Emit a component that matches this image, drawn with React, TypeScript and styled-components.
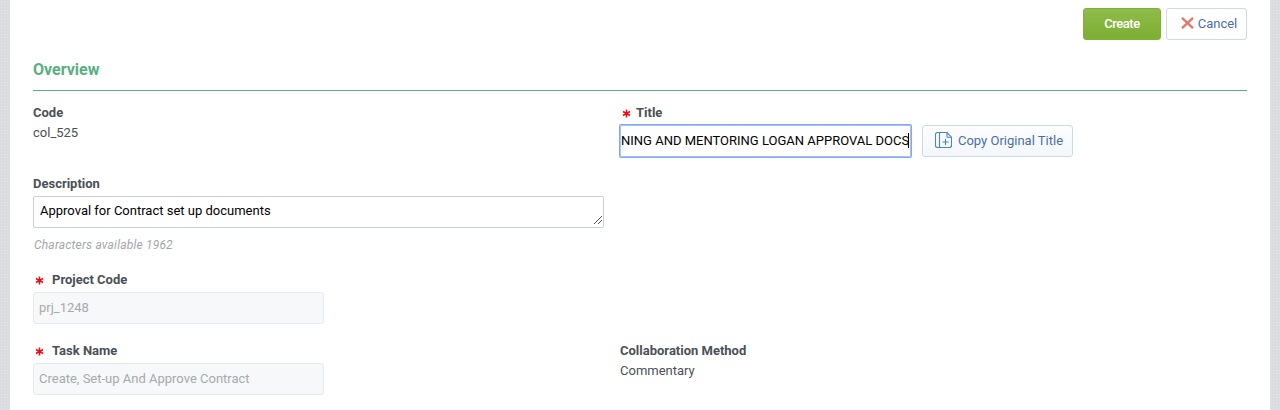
import React from "react";
import styled, { createGlobalStyle } from "styled-components";

const GlobalStyle = createGlobalStyle`
  * { box-sizing: border-box; }
  body {
    margin: 0;
    font-family: Roboto, "Liberation Sans", sans-serif;
    font-size: 13px;
    line-height: 16px;
    color: #4a5056;
    overflow: hidden;
  }
`;

const Page = styled.div`
  height: 410px;
  padding: 0 10px;
  overflow: hidden;
  background-color: #dbdde0;
  background-image:
    repeating-linear-gradient(0deg, rgba(255, 255, 255, 0.12) 0 1px, transparent 1px 3px),
    repeating-linear-gradient(90deg, rgba(120, 125, 130, 0.03) 0 1px, transparent 1px 3px);
`;

const Panel = styled.main`
  height: 100%;
  padding: 8px 23px 0;
  background: #fff;
`;

const Toolbar = styled.div`
  display: flex;
  justify-content: flex-end;
  gap: 5px;
`;

const Button = styled.button<{ $width: number }>`
  display: flex;
  align-items: center;
  justify-content: center;
  flex: none;
  width: ${(p) => p.$width}px;
  height: 32px;
  padding: 0 0 1px;
  border: 1px solid #cddae6;
  border-radius: 3px;
  background: #fff;
  color: #4a6fa5;
  font: 400 13px/16px Roboto, "Liberation Sans", sans-serif;
  white-space: nowrap;
`;

const PrimaryButton = styled(Button)`
  border-color: #82b03a;
  background: linear-gradient(#8fbc4c, #7dae31);
  color: #fff;
  font-weight: 500;
  letter-spacing: -0.45px;
`;

const CancelButton = styled(Button)`
  gap: 4px;
  padding-left: 5px;

  svg {
    margin-top: -2px;
  }
`;

const CopyButton = styled(Button)`
  gap: 6px;
  padding-left: 3px;
  background: linear-gradient(#fcfdff, #f3f7fc);
`;

const SectionTitle = styled.h2`
  height: 51px;
  margin: 0 0 14px;
  padding-top: 20px;
  border-bottom: 1px solid #57b07f;
  color: #57b07f;
  font-size: 16px;
  font-weight: 700;
  line-height: 20px;
`;

const Form = styled.div`
  display: grid;
  grid-template-columns: 587px 1fr;
  grid-template-rows: 71px 96px 71px 71px;
`;

const Field = styled.div<{ $wide?: boolean }>`
  display: flex;
  flex-direction: column;
  gap: 4px;
  grid-column: ${(p) => (p.$wide ? "1 / -1" : "auto")};
`;

const Label = styled.div`
  display: flex;
  height: 16px;
  font-weight: 700;
`;

const Star = styled.svg<{ $gap: number }>`
  width: 9px;
  height: 9px;
  margin: 4px ${(p) => p.$gap}px 0 2px;
  stroke: #f5090d;
  stroke-width: 1.5;
`;

const Value = styled.div`
  height: 16px;
`;

const InputRow = styled.div`
  display: flex;
  gap: 11px;
`;

const TitleBox = styled.div`
  display: flex;
  align-items: center;
  justify-content: flex-end;
  width: 291px;
  height: 32px;
  padding: 0 2px 1px 1px;
  background: #fff;
  box-shadow: inset 0 0 0 1px #a3c2f3, 0 0 0 1px #82aaf0;
  color: #000;
  white-space: nowrap;
  border-radius: 1px;
`;

const Caret = styled.span`
  width: 1px;
  height: 15px;
  margin-left: -1px;
  background: #000;
`;

const TextBox = styled.div`
  display: flex;
  align-items: center;
  justify-content: space-between;
  width: 571px;
  height: 32px;
  padding: 0 1px 2px 6px;
  border: 1px solid #cbd0d4;
  border-radius: 2px;
  color: #000;
`;

const Grip = styled.svg`
  align-self: flex-end;
  width: 9px;
  height: 9px;
  fill: #555;
`;

const Hint = styled.div`
  margin: 5px 0 0 1px;
  color: #a3a7aa;
  font-size: 12px;
  font-style: italic;
  letter-spacing: 0.19px;
`;

const DisabledBox = styled.div`
  display: flex;
  align-items: center;
  width: 291px;
  height: 32px;
  padding: 0 5px 1px;
  border: 1px solid #e3e9ef;
  border-radius: 3px;
  background: #f6f8fa;
  color: #a6aaad;
`;

const Required = ({ gap = 8 }: { gap?: number }) => (
  <Star $gap={gap} viewBox="0 0 9 9">
    <path d="M4.5 .5v8M1 2.5l7 4M8 2.5l-7 4" />
  </Star>
);

const gripDots = [[8, 0], [7, 1], [6, 2], [5, 3], [4, 4], [3, 5], [2, 6], [1, 7], [8, 4], [7, 5], [6, 6], [5, 7]];

export default function App() {
  return (
    <>
      <GlobalStyle />
      <Page>
        <Panel>
          <Toolbar>
            <PrimaryButton $width={78}>Create</PrimaryButton>
            <CancelButton $width={81}>
              <svg width="13" height="12" viewBox="0 0 13 12" fill="none" stroke="#e17c6c" strokeWidth="2.4">
                <path d="M1 .8l11 10.4M12 .8L1 11.2" />
              </svg>
              Cancel
            </CancelButton>
          </Toolbar>
          <SectionTitle>Overview</SectionTitle>
          <Form>
            <Field>
              <Label>Code</Label>
              <Value>col_525</Value>
            </Field>
            <Field>
              <Label><Required gap={5} />Title</Label>
              <InputRow>
                <TitleBox>
                  <span>NING AND MENTORING LOGAN APPROVAL DOCS</span>
                  <Caret />
                </TitleBox>
                <CopyButton $width={151}>
                  <svg width="17" height="17" viewBox="0 0 17 17" fill="none" stroke="#4a84c4" strokeWidth="1.1">
                    <path d="M12 .5H2.500a2 2 0 0 0-2 2v11a2 2 0 0 0 2 2h12a2 2 0 0 0 2-2V5.200zM12 .5v3.700a1 1 0 0 0 1 1h3.500M4.500 .5v15M10.500 7v6M7.500 10h6" />
                  </svg>
                  Copy Original Title
                </CopyButton>
              </InputRow>
            </Field>
            <Field $wide>
              <Label>Description</Label>
              <TextBox>
                Approval for Contract set up documents
                <Grip viewBox="0 0 9 9" shapeRendering="crispEdges">
                  {gripDots.map(([x, y]) => (
                    <rect key={`${x}-${y}`} x={x} y={y} width="1" height="1" />
                  ))}
                </Grip>
              </TextBox>
              <Hint>Characters available 1962</Hint>
            </Field>
            <Field $wide>
              <Label><Required />Project Code</Label>
              <DisabledBox>prj_1248</DisabledBox>
            </Field>
            <Field>
              <Label><Required />Task Name</Label>
              <DisabledBox>Create, Set-up And Approve Contract</DisabledBox>
            </Field>
            <Field>
              <Label>Collaboration Method</Label>
              <Value>Commentary</Value>
            </Field>
          </Form>
        </Panel>
      </Page>
    </>
  );
}
